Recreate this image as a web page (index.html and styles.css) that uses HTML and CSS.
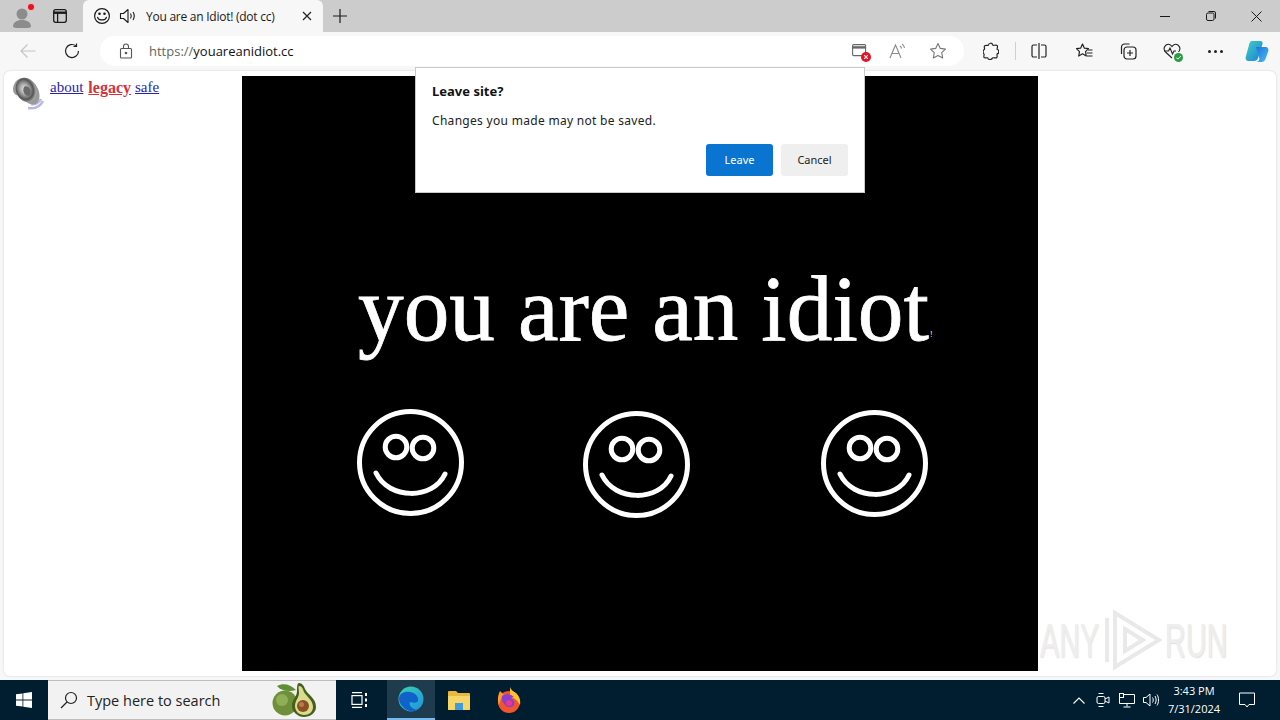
FILE: index.html
```html
<!DOCTYPE html>
<html lang="en">

<head>
    <meta charset="UTF-8">
    <title>You are an Idiot! (dot cc)</title>
    <link rel="stylesheet" href="styles.css">
</head>

<body>
    <svg class="sprites" width="0" height="0">
        <symbol id="smiley" viewBox="0 0 107 107">
            <circle cx="53.500" cy="53.500" r="51" fill="none" stroke="#fff" stroke-width="5"/>
            <circle cx="39" cy="38" r="10.800" fill="none" stroke="#fff" stroke-width="5"/>
            <circle cx="66" cy="39" r="10.800" fill="none" stroke="#fff" stroke-width="5"/>
            <path d="M19 64C32 91 76 91 88 65" fill="none" stroke="#fff" stroke-width="5" stroke-linecap="round"/>
        </symbol>
    </svg>

    <div class="tabstrip">
        <div class="profile">
            <svg width="24" height="24" viewBox="0 0 24 24">
                <circle cx="12" cy="10" r="5.500" fill="#8c8c8c"/>
                <path d="M3 23c0-5 4-7 9-7s9 2 9 7c-2 1-5 1.500-9 1.500S5 24 3 23z" fill="#8c8c8c"/>
            </svg>
            <span class="profile-dot"></span>
        </div>
        <button class="strip-btn">
            <svg width="16" height="16" viewBox="0 0 16 16" fill="none" stroke="#1a1a1a" stroke-width="1.300">
                <rect x="1.700" y="1.700" width="12.600" height="12.600" rx="2"/>
                <path d="M1.700 4.700h12.600" stroke-width="2.400"/>
                <path d="M5.600 4.700v9.600"/>
            </svg>
        </button>
        <div class="tab">
            <svg class="tab-icon" width="18" height="18" viewBox="0 0 18 18" fill="none" stroke="#1a1a1a" stroke-width="1.200">
                <circle cx="9" cy="9" r="7.400"/>
                <circle cx="6.500" cy="6.800" r="1.300" fill="#1a1a1a" stroke="none"/>
                <circle cx="11.500" cy="6.800" r="1.300" fill="#1a1a1a" stroke="none"/>
                <path d="M4.600 10.400c1.400 3.400 7.400 3.400 8.800 0" stroke-linecap="round"/>
            </svg>
            <svg class="tab-icon" width="18" height="18" viewBox="0 0 18 18" fill="none" stroke="#1a1a1a" stroke-width="1.100">
                <path d="M1.500 6.500h3L9 2.500v13l-4.500-4h-3z" stroke-linejoin="round"/>
                <path d="M11.500 6.500c1 1.500 1 3.500 0 5M14 5c1.600 2.500 1.600 5.500 0 8"/>
            </svg>
            <span class="tab-title">You are an Idiot! (dot cc)</span>
            <svg class="tab-close" width="10" height="10" viewBox="0 0 10 10" stroke="#222" stroke-width="1.200">
                <path d="M1 1l8 8M9 1l-8 8"/>
            </svg>
        </div>
        <button class="strip-btn new-tab">
            <svg width="14" height="14" viewBox="0 0 14 14" stroke="#1a1a1a" stroke-width="1.200">
                <path d="M7 0v14M0 7h14"/>
            </svg>
        </button>
        <div class="window-btns">
            <svg width="10" height="10" viewBox="0 0 10 10" stroke="#1a1a1a"><path d="M0 5.500h10"/></svg>
            <svg width="10" height="10" viewBox="0 0 10 10" fill="none" stroke="#1a1a1a">
                <rect x=".5" y="2" width="7.500" height="7.500" rx="1.500"/>
                <path d="M2.500.5h5.500a1.500 1.500 0 0 1 1.500 1.500v5.500"/>
            </svg>
            <svg width="11" height="11" viewBox="0 0 11 11" stroke="#1a1a1a"><path d="M.5.5l10 10M10.500.5l-10 10"/></svg>
        </div>
    </div>

    <div class="toolbar">
        <svg class="back" width="16" height="16" viewBox="0 0 16 16" fill="none" stroke="#c4c4c4" stroke-width="1.200">
            <path d="M15.500 8H1M7.500 1.500L1 8l6.500 6.500"/>
        </svg>
        <svg class="reload" width="16" height="16" viewBox="0 0 16 16" fill="none" stroke="#222" stroke-width="1.200">
            <path d="M14.500 8A6.500 6.500 0 1 1 12 2.900"/>
            <path d="M12.500.5v3h-3"/>
        </svg>
        <div class="addressbar">
            <svg class="lock" width="14" height="16" viewBox="0 0 14 16" fill="none" stroke="#555" stroke-width="1.100">
                <rect x="1.500" y="5.500" width="11" height="9.500" rx="1"/>
                <path d="M4.500 5.500V3.500a2.500 2.500 0 0 1 5 0v2"/>
                <circle cx="7" cy="10" r=".8" fill="#555"/>
            </svg>
            <span class="url"><span class="url-scheme">https://</span>youareanidiot.cc</span>
            <div class="address-icons">
                <span class="blocked">
                    <svg width="15" height="14" viewBox="0 0 15 14" fill="none" stroke="#666" stroke-width="1.100">
                        <rect x=".6" y=".6" width="13" height="11" rx="1"/>
                        <path d="M.6 3.400h13" stroke-width="2.400"/>
                    </svg>
                    <svg class="blocked-dot" width="10" height="10" viewBox="0 0 10 10">
                        <circle cx="5" cy="5" r="5" fill="#e81123"/>
                        <path d="M3.200 3.200l3.600 3.600M6.800 3.200l-3.600 3.600" stroke="#fff" stroke-width="1.100"/>
                    </svg>
                </span>
                <svg width="18" height="16" viewBox="0 0 18 16" fill="none" stroke="#8a8a8a" stroke-width="1.100">
                    <path d="M1 15L6.500 2 12 15M3 10.500h7"/>
                    <path d="M11 3c1 .7 1.400 1.500 1.500 2.500M13 1c1.500 1 2.300 2.500 2.500 4"/>
                </svg>
                <svg width="18" height="18" viewBox="0 0 18 18" fill="none" stroke="#777" stroke-width="1.100">
                    <path d="M9 1.500l2.300 4.900 5.200.7-3.800 3.600 1 5.300L9 13.400 4.300 16l1-5.300L1.500 7.100l5.200-.7z" stroke-linejoin="round"/>
                </svg>
            </div>
        </div>
        <div class="tools">
            <svg class="tool-ext" width="16" height="18" viewBox="0 0 16 18" fill="none" stroke="#222" stroke-width="1.200">
                <path d="M5.500 3.200C5.600.6 9.400.6 9.600 3c.8 1 3.600-.6 4.600.6 1 1.200-.6 3.200.1 3.900 2 .4 2 4 0 4.200-.9.700.4 2.900-.5 3.900-1 1-3.600-.4-4.400.4-.6 2-4.300 2-4.600 0-.8-.8-2.700.5-3.600-.4-1-1 .4-3.100-.3-3.800C-.3 11.300-.2 8 1.400 7.500c.6-.8-.7-2.700.2-3.700 1-1 3-.2 3.900-.6z" stroke-linejoin="round"/>
            </svg>
            <span class="tool-sep"></span>
            <svg width="16" height="16" viewBox="0 0 16 16" fill="none" stroke="#222" stroke-width="1.200">
                <path d="M6 2H2.500A1.500 1.500 0 0 0 1 3.500v9A1.500 1.500 0 0 0 2.500 14H6M10 2h3.500A1.500 1.500 0 0 1 15 3.500v9a1.500 1.500 0 0 1-1.500 1.500H10M8 0v16"/>
            </svg>
            <svg width="18" height="18" viewBox="0 0 18 18" fill="none" stroke="#222" stroke-width="1.200">
                <path d="M7.500 2l1.900 4.200 4.100.5-3 3 .8 4.300-3.800-2.200L3.700 14l.8-4.300-3-3 4.100-.5z" stroke-linejoin="round"/>
                <path d="M13 8h4.500M12 11h5.500M12 14h5.500"/>
            </svg>
            <svg width="18" height="18" viewBox="0 0 18 18" fill="none" stroke="#222" stroke-width="1.200">
                <path d="M2.500 12V5a3 3 0 0 1 3-3h5"/>
                <rect x="5" y="5" width="12" height="12" rx="3"/>
                <path d="M11 8v6M8 11h6"/>
            </svg>
            <span class="health">
                <svg width="18" height="16" viewBox="0 0 18 16" fill="none" stroke="#222" stroke-width="1.100">
                    <path d="M9 15L2.500 9C-1 5 3 .5 6.500 1.500 8 2 8.500 3 9 3.500 9.500 3 10 2 11.500 1.500 15 .5 19 5 15.500 9"/>
                    <path d="M1 8h4.500l1.500-3 2.500 6 1.500-3h2"/>
                </svg>
                <svg class="health-dot" width="9" height="9" viewBox="0 0 9 9">
                    <circle cx="4.500" cy="4.500" r="4.500" fill="#2b9c45"/>
                    <path d="M2.300 4.600l1.500 1.500 3-3" fill="none" stroke="#fff"/>
                </svg>
            </span>
            <span class="more"><i></i><i></i><i></i></span>
            <svg class="copilot" width="26" height="26" viewBox="0 0 26 26">
                <defs>
                    <linearGradient id="cp-a" x1="0" y1="0" x2="1" y2="1">
                        <stop offset="0" stop-color="#3fd0c0"/>
                        <stop offset="1" stop-color="#1b7fd8"/>
                    </linearGradient>
                    <linearGradient id="cp-b" x1="0" y1="0" x2="1" y2="1">
                        <stop offset="0" stop-color="#1f6fe0"/>
                        <stop offset="1" stop-color="#45c4f0"/>
                    </linearGradient>
                </defs>
                <path d="M8 3h8c2 0 3 1 2.500 3L14 20c-.6 2-2 3-4 3H5c-3 0-4-2-3-5L5 7c.6-2.500 1.500-4 3-4z" fill="url(#cp-a)"/>
                <path d="M12 9h9c3 0 4 2 3 5l-2.500 7c-.7 2-2 3-4 3H12c2 0 3-1 3.500-3z" fill="url(#cp-b)"/>
            </svg>
        </div>
    </div>

    <div class="viewport">
        <div class="page">
            <div class="page-links">
                <svg class="speaker" width="34" height="34" viewBox="0 0 34 34">
                    <defs>
                        <radialGradient id="spk" cx=".45" cy=".45" r=".6">
                            <stop offset="0" stop-color="#f2f2f2"/>
                            <stop offset=".4" stop-color="#a2a2a2"/>
                            <stop offset=".7" stop-color="#555555"/>
                            <stop offset="1" stop-color="#c4c4c4"/>
                        </radialGradient>
                    </defs>
                    <path d="M20 28c4 1 8-1 10-5M17 32c6 1 12-1 15-7" fill="none" stroke="#b9b9e0" stroke-width="2.500"/>
                    <path d="M8 3c6-3 14 0 18 8 4 7 3 14-1 17-6 2-12-3-15-8-2 0-5 0-7-3S2 6 8 3z" fill="#9a9a9a"/>
                    <ellipse cx="15" cy="14" rx="10" ry="12.500" fill="url(#spk)" transform="rotate(-22 15 14)"/>
                    <ellipse cx="16" cy="15" rx="3.500" ry="5" fill="#6a6a6a" transform="rotate(-22 16 15)"/>
                </svg>
                <a href="#">about</a>
                <a href="#" class="legacy">legacy</a>
                <a href="#">safe</a>
            </div>

            <div class="stage">
                <span class="stage-text">you are an idiot</span>
                <span class="stage-bang">!</span>
                <svg class="face face-1"><use href="#smiley"/></svg>
                <svg class="face face-2"><use href="#smiley"/></svg>
                <svg class="face face-3"><use href="#smiley"/></svg>
            </div>

            <div class="watermark">
                <span class="mark-word">ANY</span>
                <svg width="58" height="64" viewBox="0 0 58 64" fill="none" stroke="#e9e9e9" stroke-width="4">
                    <path d="M3 10v44M11 5l44 27-44 27zM21 21l18 11-18 11z"/>
                </svg>
                <span class="mark-word">RUN</span>
            </div>
        </div>

        <div class="dialog">
            <h1 class="dialog-title">Leave site?</h1>
            <p class="dialog-text">Changes you made may not be saved.</p>
            <div class="dialog-actions">
                <button class="btn btn-primary">Leave</button>
                <button class="btn">Cancel</button>
            </div>
        </div>
    </div>

    <div class="taskbar">
        <div class="start">
            <svg width="16" height="16" viewBox="0 0 16 16" fill="#fff">
                <path d="M0 2.300l6.500-.9v6.200H0zM7.300 1.300L16 0v7.600H7.300zM0 8.400h6.500v6.200L0 13.700zM7.300 8.400H16V16l-8.700-1.300z"/>
            </svg>
        </div>
        <div class="search">
            <svg width="18" height="18" viewBox="0 0 18 18" fill="none" stroke="#222" stroke-width="1.200">
                <circle cx="11" cy="7" r="5.500"/>
                <path d="M7 11l-6 6"/>
            </svg>
            <span class="search-text">Type here to search</span>
            <svg class="avocado" width="46" height="34" viewBox="0 0 46 34">
                <path d="M5 3C11 0 18 1 24 7 17 9 9 8 5 3z" fill="#5f8f33"/>
                <circle cx="13" cy="20" r="12.500" fill="#6f8f3a"/>
                <circle cx="10" cy="17" r="6" fill="#8fae55"/>
                <path d="M27 0c3 0 5 3 6 6 2 5 11 9 11 18 0 6-6 10-12 10S20 29 20 23c0-7 5-9 5-15 0-3 0-8 2-8z" fill="#465f1e"/>
                <path d="M27 3c3 0 4 3 5 6 2 4 9 8 9 15 0 5-4 8-9 8s-9-4-9-9c0-6 4-8 4-13 0-3-1-7 0-7z" fill="#d9dc8e"/>
                <circle cx="31" cy="23" r="6" fill="#8a4f24"/>
                <circle cx="29.500" cy="21.500" r="2.500" fill="#b87a48"/>
            </svg>
        </div>
        <div class="task-item">
            <svg width="18" height="16" viewBox="0 0 18 16" fill="none" stroke="#fff" stroke-width="1.200">
                <path d="M1 .6h10M1 15.400h10"/>
                <rect x="1" y="3.600" width="10" height="8.800"/>
                <path d="M15 1v3M15 6.500v3M15 12v3" stroke-width="2"/>
            </svg>
        </div>
        <div class="task-item task-active">
            <svg width="26" height="26" viewBox="0 0 26 26">
                <defs>
                    <linearGradient id="edge" x1="0" y1="0" x2="1" y2="1">
                        <stop offset="0" stop-color="#38d6b0"/>
                        <stop offset="1" stop-color="#1f8fe0"/>
                    </linearGradient>
                </defs>
                <circle cx="13" cy="13" r="12.500" fill="url(#edge)"/>
                <path d="M1 13C1 7 7 5 12 6c6 1 9 5 8 9-1 2-4 2-8 1-1 2 0 5 4 7 2 1 4 1 5 0-3 3-11 3-15-1-3-3-5-6-5-9z" fill="#0f62c9"/>
            </svg>
        </div>
        <div class="task-item">
            <svg width="24" height="22" viewBox="0 0 24 22">
                <path d="M1 3a1 1 0 0 1 1-1h7l2 2h11a1 1 0 0 1 1 1v15a1 1 0 0 1-1 1H2a1 1 0 0 1-1-1z" fill="#e8b93c"/>
                <path d="M1 7h22v13a1 1 0 0 1-1 1H2a1 1 0 0 1-1-1z" fill="#f6d667"/>
                <rect x="8" y="14" width="8" height="7" fill="#3d9be0"/>
            </svg>
        </div>
        <div class="task-item task-firefox">
            <svg width="24" height="26" viewBox="0 0 24 26">
                <circle cx="12" cy="15" r="11" fill="#f2552a"/>
                <path d="M13 0c1 3 3 4 6 6 3 3 5 7 4 12-2-4-5-7-10-8z" fill="#ffc22e"/>
                <path d="M3 4c-2 4-3 9-1 14 1-4 2-7 5-10z" fill="#ff9a2e"/>
                <path d="M5 9c4-3 9-2 12 1-2 0-3 1-3 2 3 0 4 3 3 6-2 3-7 3-9 0-2-2-4-5-3-9z" fill="#8a3fd0"/>
                <circle cx="12" cy="16" r="3" fill="#e7398f"/>
            </svg>
        </div>
        <div class="tray">
            <span class="tray-slot">
                <svg width="12" height="7" viewBox="0 0 12 7" fill="none" stroke="#fff" stroke-width="1.100"><path d="M.5 6.500l5.500-5.500 5.500 5.500"/></svg>
            </span>
            <span class="tray-slot">
                <svg width="14" height="16" viewBox="0 0 14 16" fill="none" stroke="#fff">
                    <rect x="1" y="4.500" width="8" height="7" rx="1.500"/>
                    <path d="M9 7l4-2v6l-4-2M2.500 1.500h5M2.500 14.500h5"/>
                </svg>
            </span>
            <span class="tray-slot">
                <svg width="16" height="15" viewBox="0 0 16 15" fill="none" stroke="#fff">
                    <path d="M.5 1.500h15v9h-15zM8 10.500v3M4.500 14h7"/>
                    <rect x=".5" y=".5" width="4" height="4" fill="#001e30"/>
                </svg>
            </span>
            <span class="tray-slot">
                <svg width="16" height="14" viewBox="0 0 16 14" fill="none" stroke="#fff">
                    <path d="M.5 4.500h2.500L7 1v12L3 9.500H.5z"/>
                    <path d="M9.500 4.500c1 1.500 1 3.500 0 5M12 3c1.500 2.500 1.500 5.500 0 8M14 1.500c2 3 2 8 0 11"/>
                </svg>
            </span>
            <div class="clock">
                <span>3:43 PM</span>
                <span>7/31/2024</span>
            </div>
            <span class="tray-notify">
                <svg width="16" height="16" viewBox="0 0 16 16" fill="none" stroke="#fff">
                    <path d="M.5 1h15v11.500H10L8 15l-2-2.500H.5z"/>
                </svg>
            </span>
        </div>
    </div>
</body>

</html>
```

FILE: styles.css
```css
* {
    box-sizing: border-box;
}

html,
body {
    margin: 0;
    padding: 0;
    height: 720px;
    overflow: hidden;
}

body {
    font-family: "Open Sans", "Noto Sans", sans-serif;
    background-color: #f7f7f7;
    display: flex;
    flex-direction: column;
}

button {
    border: none;
    background: none;
    padding: 0;
    font-family: inherit;
}

svg {
    display: block;
    flex-shrink: 0;
}

.sprites {
    position: absolute;
}

/* tab strip */
.tabstrip {
    height: 32px;
    background-color: #cccccc;
    display: flex;
    align-items: flex-end;
    padding-left: 10px;
}

.profile {
    position: relative;
    width: 24px;
    height: 32px;
    display: flex;
    align-items: center;
}

.profile-dot {
    position: absolute;
    top: 4px;
    left: 18px;
    width: 6px;
    height: 6px;
    background-color: #e81123;
    border-radius: 50%;
    box-shadow: 0 0 0 1px #e6b8b8;
}

.strip-btn {
    height: 32px;
    width: 32px;
    display: flex;
    align-items: center;
    justify-content: center;
}

.strip-btn:first-of-type {
    margin-left: 10px;
}

.tab {
    width: 240px;
    height: 32px;
    margin-left: 7px;
    padding: 0 11px 0 10px;
    background-color: #f7f7f7;
    border-radius: 6px 6px 0 0;
    display: flex;
    align-items: center;
    gap: 8px;
}

.tab-title {
    font-size: 12px;
    letter-spacing: -0.25px;
    color: #1a1a1a;
    margin-left: 1px;
    white-space: nowrap;
    flex: 1;
}

.new-tab {
    margin-left: 1px;
}

.window-btns {
    margin-left: auto;
    width: 138px;
    height: 32px;
    padding: 0 18px;
    display: flex;
    align-items: center;
    justify-content: space-between;
}

/* toolbar */
.toolbar {
    height: 36px;
    padding-top: 2px;
    display: flex;
    align-items: center;
    position: relative;
}

.back {
    margin-left: 20px;
}

.reload {
    margin-left: 28px;
}

.addressbar {
    margin-left: 20px;
    width: 864px;
    height: 30px;
    background-color: #fff;
    border-radius: 15px;
    display: flex;
    align-items: center;
    padding: 0 17px 0 19px;
}

.url {
    margin-left: 16px;
    font-size: 13px;
    color: #111;
}

.url-scheme {
    color: #666;
}

.address-icons {
    margin-left: auto;
    display: flex;
    align-items: center;
    gap: 22px;
}

.blocked,
.health {
    position: relative;
    display: block;
}

.blocked-dot {
    position: absolute;
    right: -4px;
    bottom: -4px;
}

.health-dot {
    position: absolute;
    right: -2px;
    bottom: -3px;
}

.tools {
    flex: 1;
    display: flex;
    align-items: center;
    padding-left: 19px;
    gap: 0;
}

.tool-sep {
    width: 1px;
    height: 18px;
    margin: 0 15px 0 16px;
    background-color: #cfcfcf;
}

.tools > svg:nth-of-type(3) {
    margin-left: 28px;
}

.tools > svg:nth-of-type(4) {
    margin-left: 26px;
}

.health {
    margin-left: 26px;
}

.more {
    margin-left: 27px;
    display: flex;
    gap: 3px;
}

.more i {
    width: 3px;
    height: 3px;
    border-radius: 50%;
    background-color: #222;
}

.copilot {
    margin-left: 21px;
}

/* page */
.viewport {
    position: relative;
    flex: 1;
    padding: 3px 4px 4px;
}

.page {
    position: relative;
    height: 100%;
    background-color: #fff;
    border-radius: 6px;
    box-shadow: 0 0 2px rgba(0, 0, 0, 0.18);
    overflow: hidden;
}

.page-links {
    position: absolute;
    top: 5px;
    left: 7px;
    display: flex;
    align-items: flex-start;
    gap: 4px;
    font-family: "Liberation Serif", serif;
    font-size: 15px;
    line-height: 17px;
}

.page-links a {
    color: #2a1fb0;
    margin-top: 3px;
}

.speaker {
    margin-right: 1px;
}

.page-links .legacy {
    color: #d6303a;
    font-weight: bold;
    font-size: 16px;
    margin-left: 1px;
}

.stage {
    position: absolute;
    left: 238px;
    top: 5px;
    width: 796px;
    height: 595px;
    background-color: #000;
}

.stage-text {
    position: absolute;
    left: 116px;
    top: 176px;
    font-family: "Liberation Serif", serif;
    font-size: 94px;
    line-height: 112px;
    color: #fff;
    -webkit-text-stroke: 0.8px #fff;
    white-space: nowrap;
    transform: scaleX(0.972);
    transform-origin: left top;
}

.stage-bang {
    position: absolute;
    left: 688px;
    top: 254px;
    font-family: "Liberation Serif", serif;
    font-size: 8px;
    line-height: 9px;
    color: #fff;
}

.face {
    position: absolute;
    width: 107px;
    height: 107px;
}

.face-1 {
    left: 115px;
    top: 333px;
}

.face-2 {
    left: 341px;
    top: 335px;
}

.face-3 {
    left: 579px;
    top: 334px;
}

.watermark {
    position: absolute;
    left: 1036px;
    top: 537px;
    display: flex;
    align-items: center;
    gap: 6px;
    font-family: "Liberation Sans", sans-serif;
    font-size: 48px;
    color: #eeeeee;
}

.mark-word {
    width: 62px;
    white-space: nowrap;
    transform: scaleX(0.6);
    transform-origin: left center;
    text-shadow: 1px 1px 2px #dddddd;
}

.watermark svg {
    margin-left: -4px;
}

.watermark svg + .mark-word {
    margin-left: -3px;
}

/* beforeunload dialog */
.dialog {
    position: absolute;
    top: -1px;
    left: 415px;
    width: 450px;
    height: 126px;
    background-color: #fff;
    border: 1px solid #c9c9c9;
    padding: 14px 16px 16px;
    font-family: "Noto Sans", sans-serif;
}

.dialog-title {
    margin: 0;
    font-size: 13px;
    line-height: 18px;
    font-weight: 700;
    color: #111;
}

.dialog-text {
    margin: 12px 0 0;
    font-size: 12px;
    line-height: 18px;
    color: #222;
    letter-spacing: 0.3px;
}

.dialog-actions {
    margin-top: 14px;
    display: flex;
    justify-content: flex-end;
    gap: 8px;
}

.btn {
    width: 67px;
    height: 32px;
    padding-bottom: 2px;
    border-radius: 3px;
    background-color: #efefef;
    color: #222;
    font-family: "Noto Sans", sans-serif;
    font-size: 11px;
}

.btn-primary {
    background-color: #0a74d1;
    color: #fff;
}

/* taskbar */
.taskbar {
    height: 40px;
    background-color: #001e30;
    display: flex;
    align-items: stretch;
    color: #fff;
}

.start {
    width: 48px;
    display: flex;
    align-items: center;
    justify-content: center;
}

.search {
    width: 288px;
    background-color: #f2f2f2;
    border-top: 1px solid #bdbdbd;
    border-bottom: 1px solid #bdbdbd;
    display: flex;
    align-items: center;
    padding-left: 12px;
    color: #222;
}

.search-text {
    margin-left: 9px;
    font-family: "Open Sans", sans-serif;
    font-size: 14.500px;
}

.avocado {
    margin-left: auto;
    margin-right: 18px;
}

.task-item {
    width: 48px;
    display: flex;
    align-items: center;
    justify-content: center;
}

.task-active {
    margin-left: 3px;
    background-color: #1f3b4e;
    border-bottom: 2px solid #76b9ed;
}

.task-firefox {
    margin-left: 2px;
}

.tray {
    margin-left: auto;
    display: flex;
    align-items: center;
    padding-right: 11px;
}

.tray-slot {
    width: 24px;
    display: flex;
    justify-content: center;
}

.clock {
    width: 62px;
    display: flex;
    flex-direction: column;
    align-items: center;
    font-size: 11px;
    line-height: 18px;
}

.tray-notify {
    width: 44px;
    display: flex;
    justify-content: center;
}
```
